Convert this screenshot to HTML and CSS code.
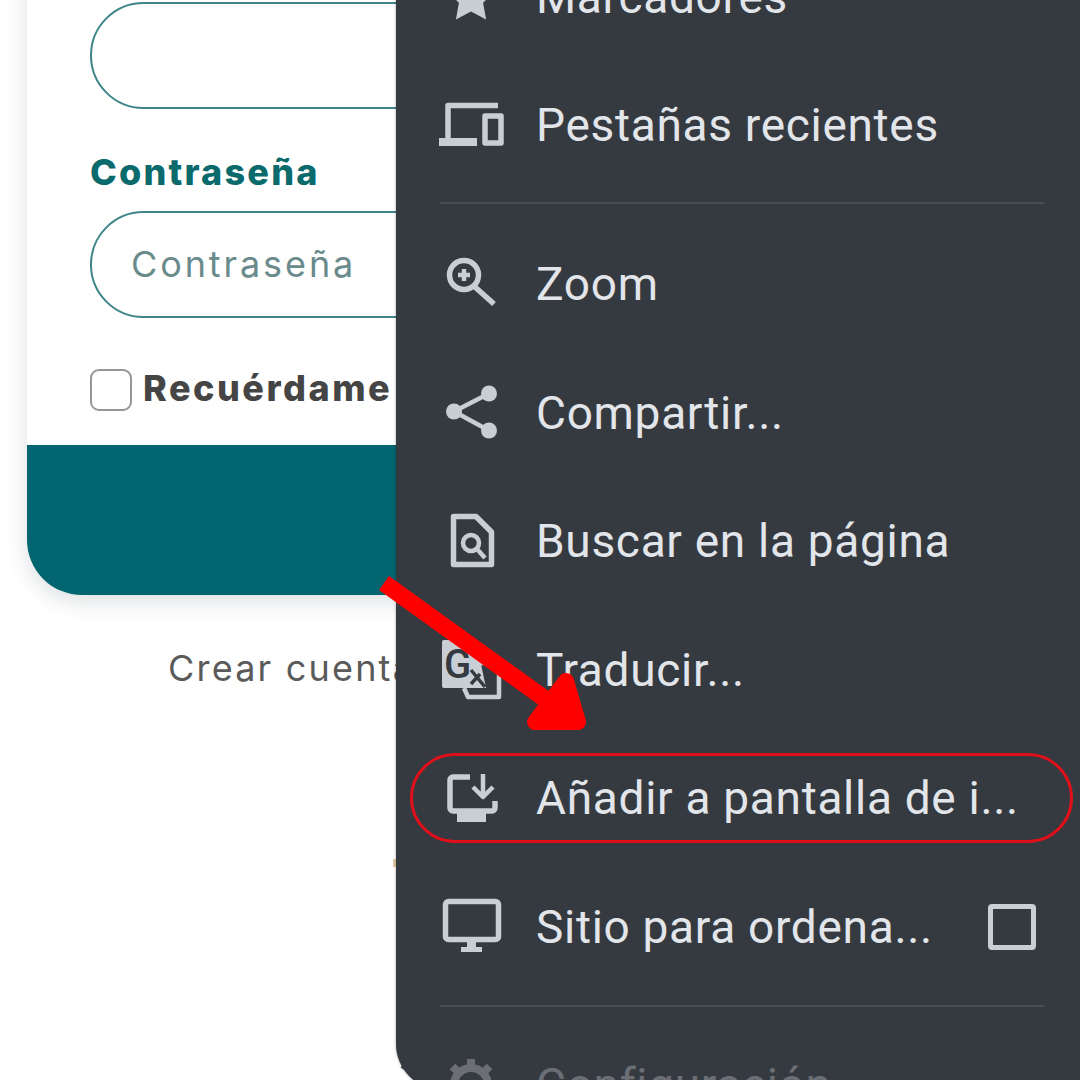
FILE: index.html
```html
<!DOCTYPE html>
<html lang="es">
<head>
  <meta charset="UTF-8" />
  <title>Añadir a pantalla de inicio</title>
  <link rel="stylesheet" href="styles.css">
</head>
<body>
  <!-- pagina de login detras del menu -->
  <div class="login-card">
    <div class="card-body">
      <div class="field"></div>
      <label class="field-label">Contraseña</label>
      <div class="field"><span class="placeholder">Contraseña</span></div>
      <div class="remember">
        <span class="check"></span>
        <span class="remember-text">Recuérdame</span>
      </div>
    </div>
    <div class="card-footer"></div>
  </div>
  <div class="create-link">Crear cuenta</div>
  <span class="speck"></span>
  <span class="peek"></span>

  <!-- menu del navegador -->
  <div class="menu">
    <div class="menu-row">
      <svg class="icon" viewBox="0 0 64 64"><path d="M32 8l7.500 15.500 17 2.300-12.400 11.900 3 16.900L32 46.500l-15.100 8.100 3-16.900L7.500 25.800l17-2.300z"/></svg>
      <span class="menu-text">Marcadores</span>
    </div>
    <div class="menu-row">
      <svg class="icon" viewBox="0 0 64 64">
        <path class="line" d="M59 11.500H9V46"/>
        <rect x="0" y="44" width="38" height="8"/>
        <rect class="line" x="46" y="22" width="16" height="27"/>
      </svg>
      <span class="menu-text">Pestañas recientes</span>
    </div>
    <div class="divider divider-top"></div>
    <div class="menu-row">
      <svg class="icon" viewBox="0 0 64 64">
        <circle class="line" cx="25" cy="23" r="14.500"/>
        <path class="line" d="M36 35l19 17"/>
        <path class="line thin" d="M25 17v12M19 23h12"/>
      </svg>
      <span class="menu-text">Zoom</span>
    </div>
    <div class="menu-row">
      <svg class="icon" viewBox="0 0 64 64">
        <path class="line thin" d="M50 12.500L15 30.500l35 19"/>
        <circle cx="50" cy="12.500" r="8"/>
        <circle cx="15" cy="30.500" r="8"/>
        <circle cx="50" cy="49.500" r="8"/>
      </svg>
      <span class="menu-text">Compartir...</span>
    </div>
    <div class="menu-row">
      <svg class="icon" viewBox="0 0 64 64">
        <path class="line" d="M14.500 6.500H37L52.500 22v32.500h-38z"/>
        <circle class="line thin" cx="32" cy="33" r="8"/>
        <path class="line thin" d="M38 39l8 9"/>
      </svg>
      <span class="menu-text">Buscar en la página</span>
    </div>
    <div class="menu-row">
      <svg class="icon" viewBox="0 0 64 64">
        <path class="line thin" d="M30 25h30v34H29l-4-9"/>
        <path d="M5 2l32 0 10 48H5a2 2 0 0 1-2-2V4a2 2 0 0 1 2-2z"/>
        <text class="icon-g" x="5" y="40">G</text>
        <path class="line dark" d="M32 32l14 17M32 46l9-10"/>
      </svg>
      <span class="menu-text">Traducir...</span>
    </div>
    <div class="menu-row">
      <svg class="icon" viewBox="0 0 64 64">
        <path class="line" d="M31 10H14a3 3 0 0 0-3 3v28a3 3 0 0 0 3 3h39a3 3 0 0 0 3-3v-7"/>
        <rect x="18" y="46" width="29" height="9"/>
        <path class="line thin" d="M44 7v23M34 20l10 10 10-10"/>
      </svg>
      <span class="menu-text">Añadir a pantalla de i...</span>
    </div>
    <div class="menu-row">
      <svg class="icon" viewBox="0 0 64 64">
        <rect class="line" x="6.500" y="6.500" width="53" height="38" rx="3"/>
        <rect x="28" y="46" width="9" height="8"/>
        <rect x="22" y="52" width="21" height="5"/>
      </svg>
      <span class="menu-text">Sitio para ordena...</span>
      <span class="menu-check"></span>
    </div>
    <div class="divider"></div>
    <div class="menu-row disabled">
      <svg class="icon" viewBox="0 0 64 64">
        <circle class="line gear" cx="32" cy="32" r="17"/>
        <path class="line gear" d="M32 6v10M32 48v10M6 32h10M48 32h10M13.500 13.500l7 7M43.500 43.500l7 7M13.500 50.500l7-7M43.500 20.500l7-7"/>
      </svg>
      <span class="menu-text">Configuración</span>
    </div>
  </div>

  <!-- anotaciones en rojo -->
  <div class="highlight"></div>
  <svg class="arrow" viewBox="0 0 1080 1080">
    <path class="arrow-line" d="M384 583L545 699"/>
    <path class="arrow-head" d="M566 681L535 722H578z"/>
  </svg>
</body>
</html>
```

FILE: styles.css
```css
html, body {
  margin: 0;
  padding: 0;
  height: 1080px;
  overflow: hidden;
  background: #fff;
  font-family: Inter, "Liberation Sans", sans-serif;
}

/* Tarjeta de login */
.login-card {
  width: 1000px;
  margin: -60px 0 0 27px;
  border-radius: 0 0 55px 55px;
  background: #fff;
  box-shadow: 0 6px 22px rgba(30, 50, 60, 0.16);
  overflow: hidden;
}

.card-body {
  padding: 62px 0 34px 63px;
}

.field {
  width: 600px;
  height: 103px;
  display: flex;
  align-items: center;
  padding-left: 39px;
  border: 2px solid #3f8587;
  border-radius: 54px;
}

.field-label {
  display: block;
  height: 102px;
  line-height: 126px;
  font-size: 36px;
  font-weight: 800;
  letter-spacing: 2.200px;
  color: #0b6a6c;
}

.placeholder {
  margin-top: -2px;
  font-size: 36px;
  letter-spacing: 2.900px;
  color: #6a8a8c;
}

.remember {
  display: flex;
  align-items: center;
  gap: 11px;
  height: 42px;
  margin-top: 51px;
}

.check {
  width: 38px;
  height: 38px;
  border: 2px solid #94979a;
  border-radius: 9px;
}

.remember-text {
  margin-top: -4px;
  font-size: 36px;
  font-weight: 800;
  letter-spacing: 2.500px;
  color: #454545;
}

.card-footer {
  height: 150px;
  background: #02656f;
}

.create-link {
  margin: 50px 0 0 168px;
  font-size: 36px;
  letter-spacing: 2.200px;
  line-height: 46px;
  white-space: nowrap;
  color: #5a5a5a;
}

/* restos de la pagina que asoman junto al menu */
.speck {
  position: absolute;
  top: 859px;
  left: 393px;
  width: 4px;
  height: 8px;
  background: #e8c9a0;
}

.peek {
  position: absolute;
  top: 1066px;
  left: 401px;
  width: 12px;
  height: 5px;
  background: #55595e;
  transform: rotate(30deg);
}

/* Menu oscuro */
.menu {
  position: absolute;
  top: -67px;
  left: 396px;
  width: 684px;
  height: 1157px;
  box-sizing: border-box;
  padding-left: 43px;
  overflow: hidden;
  background: #353a40;
  border-radius: 0 0 0 46px;
  box-shadow: 0 0 3px rgba(0, 0, 0, 0.35);
  font-family: Roboto, "Liberation Sans", sans-serif;
  font-size: 46px;
  letter-spacing: 0.700px;
  color: #e2e5e9;
}

.menu-row {
  display: flex;
  align-items: center;
  gap: 33px;
  height: 128.600px;
}

.menu-text {
  margin-top: -1px;
}

.icon {
  width: 64px;
  height: 64px;
  flex: none;
  overflow: visible;
  fill: #c9ced5;
}

.line {
  fill: none;
  stroke: #c9ced5;
  stroke-width: 5.500;
  stroke-linejoin: round;
}

.thin {
  stroke-width: 4.500;
}

.dark {
  stroke: #353a40;
  stroke-width: 3.500;
}

.icon-g {
  font-family: Roboto, sans-serif;
  font-size: 40px;
  font-weight: 500;
  letter-spacing: 0;
  fill: #353a40;
}

.menu-check {
  width: 38px;
  height: 36px;
  margin-left: auto;
  margin-right: 44px;
  border: 5px solid #c9ced5;
  border-radius: 4px;
}

.divider {
  height: 2px;
  margin: 13px 36px 14px 1px;
  background: #4a4e54;
}

.divider-top {
  margin-top: 12px;
  margin-bottom: 16px;
}

.disabled {
  color: #6b6f75;
}

.gear {
  stroke: #6b6f75;
  stroke-width: 8;
}

/* Anotaciones */
.highlight {
  position: absolute;
  top: 753px;
  left: 410px;
  width: 657px;
  height: 84px;
  border: 3px solid #e0101a;
  border-radius: 45px;
}

.arrow {
  position: absolute;
  top: 0;
  left: 0;
  width: 1080px;
  height: 1080px;
}

.arrow-line {
  fill: none;
  stroke: #ff0000;
  stroke-width: 17;
}

.arrow-head {
  fill: #ff0000;
  stroke: #ff0000;
  stroke-width: 16;
  stroke-linejoin: round;
}
```
